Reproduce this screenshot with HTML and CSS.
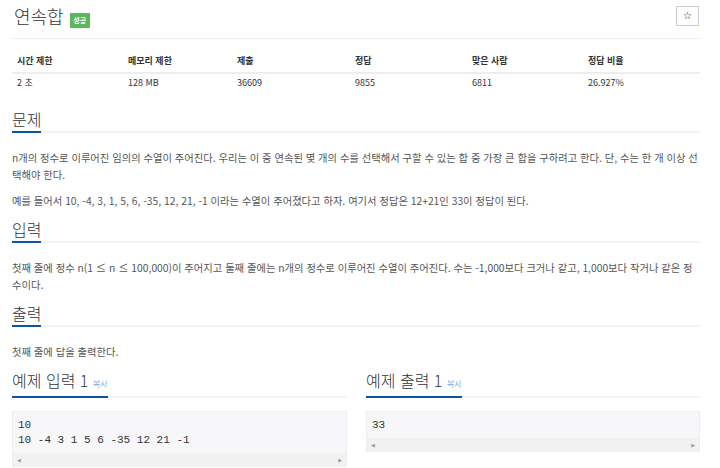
FILE: index.html
```html
<!DOCTYPE html>
<html lang="ko">
<head>
    <meta charset="UTF-8">
    <meta name="viewport" content="width=device-width, initial-scale=1.0">
    <title>연속합</title>
    <link rel="stylesheet" href="styles.css">
</head>
<body>
    <div class="page">
        <div class="title-bar">
            <h1 class="title">연속합 <span class="badge">성공</span></h1>
            <button class="star">☆</button>
        </div>

        <table class="info">
            <thead>
                <tr>
                    <th>시간 제한</th>
                    <th>메모리 제한</th>
                    <th>제출</th>
                    <th>정답</th>
                    <th>맞은 사람</th>
                    <th>정답 비율</th>
                </tr>
            </thead>
            <tbody>
                <tr>
                    <td>2 초</td>
                    <td>128 MB</td>
                    <td>36609</td>
                    <td>9855</td>
                    <td>6811</td>
                    <td>26.927%</td>
                </tr>
            </tbody>
        </table>

        <div class="section">
            <h2 class="headline"><span>문제</span></h2>
            <p>n개의 정수로 이루어진 임의의 수열이 주어진다. 우리는 이 중 연속된 몇 개의 수를 선택해서 구할 수 있는 합 중 가장 큰 합을 구하려고 한다. 단, 수는 한 개 이상 선택해야 한다.</p>
            <p>예를 들어서 10, -4, 3, 1, 5, 6, -35, 12, 21, -1 이라는 수열이 주어졌다고 하자. 여기서 정답은 12+21인 33이 정답이 된다.</p>
        </div>

        <div class="section">
            <h2 class="headline"><span>입력</span></h2>
            <p>첫째 줄에 정수 n(1 ≤ n ≤ 100,000)이 주어지고 둘째 줄에는 n개의 정수로 이루어진 수열이 주어진다. 수는 -1,000보다 크거나 같고, 1,000보다 작거나 같은 정수이다.</p>
        </div>

        <div class="section">
            <h2 class="headline"><span>출력</span></h2>
            <p>첫째 줄에 답을 출력한다.</p>
        </div>

        <div class="samples">
            <div class="sample">
                <h2 class="headline"><span>예제 입력 1 <a class="copy">복사</a></span></h2>
                <div class="sample-box">
                    <pre>10
10 -4 3 1 5 6 -35 12 21 -1</pre>
                    <div class="scroll"><i>◀</i><i>▶</i></div>
                </div>
            </div>
            <div class="sample">
                <h2 class="headline"><span>예제 출력 1 <a class="copy">복사</a></span></h2>
                <div class="sample-box">
                    <pre>33</pre>
                    <div class="scroll"><i>◀</i><i>▶</i></div>
                </div>
            </div>
        </div>
    </div>
</body>
</html>
```

FILE: styles.css
```css
body{
    margin: 0;
    padding: 0;
    background: #fff;
    font-family: "Noto Sans CJK KR", "Liberation Sans", sans-serif;
    color: #333;
}
.page{
    padding: 0 20px 0 12px;
}
.title-bar{
    display: flex;
    justify-content: space-between;
    align-items: flex-start;
    height: 32px;
    padding: 6px 1px 0 0;
    border-bottom: 1px solid #eee;
}
.title{
    display: flex;
    align-items: flex-start;
    margin: 0;
    font-size: 18px;
    font-weight: 300;
    line-height: 20px;
    padding-left: 2px;
}
.badge{
    display: inline-block;
    margin: 7px 0 0 6px;
    width: 20px;
    height: 15px;
    line-height: 15px;
    text-align: center;
    background: #5cb85c;
    color: #fff;
    font-size: 7px;
    font-weight: bold;
}
.star{
    width: 23px;
    height: 20px;
    padding: 0;
    border: 1px solid #ccc;
    background: #fff;
    color: #111;
    font-size: 10px;
    line-height: 18px;
    font-family: "DejaVu Sans", sans-serif;
}
.info{
    width: 100%;
    margin-top: 11px;
    border-collapse: collapse;
    font-size: 9px;
    line-height: 12px;
}
.info th{
    text-align: left;
    padding: 5px 5px;
    border-bottom: 2px solid #eee;
    font-weight: bold;
}
.info td{
    padding: 3px 5px 5px;
}
.info th:nth-child(1){ width: 101px; }
.info th:nth-child(2){ width: 99px; }
.info th:nth-child(3){ width: 108px; }
.info th:nth-child(4){ width: 107px; }
.info th:nth-child(5){ width: 106px; }
.section{
    margin-top: 10px;
}
.info + .section{
    margin-top: 15px;
}
.headline{
    margin: 0 0 16px;
    padding: 0;
    font-size: 16px;
    font-weight: 300;
    line-height: 20px;
    border-bottom: 2px solid #f3f3f3;
}
.headline span{
    display: inline-block;
    padding-bottom: 2px;
    margin-bottom: -2px;
    border-bottom: 2px solid #0d55a0;
}
.section p{
    margin: 0 0 9px;
    font-size: 10.3px;
    line-height: 17px;
    color: #555;
    word-break: break-all;
}
.samples{
    display: grid;
    grid-template-columns: 335px 1fr;
    gap: 19px;
    margin-top: 10px;
}
.sample .headline{
    margin-bottom: 13px;
}
.copy{
    font-size: 8px;
    color: #3b7dd8;
}
.sample-box{
    background: #f7f7f9;
    border: 1px solid #eeeef1;
}
.sample-box pre{
    margin: 0;
    padding: 6px 5px 5px;
    font-family: "Liberation Mono", monospace;
    font-size: 11px;
    line-height: 15px;
    color: #333;
}
.scroll{
    display: flex;
    justify-content: space-between;
    align-items: center;
    height: 13px;
    padding: 0 4px;
    background: #f1f1f1;
}
.scroll i{
    font-style: normal;
    font-size: 5px;
    color: #999;
    font-family: "DejaVu Sans", sans-serif;
}
```
